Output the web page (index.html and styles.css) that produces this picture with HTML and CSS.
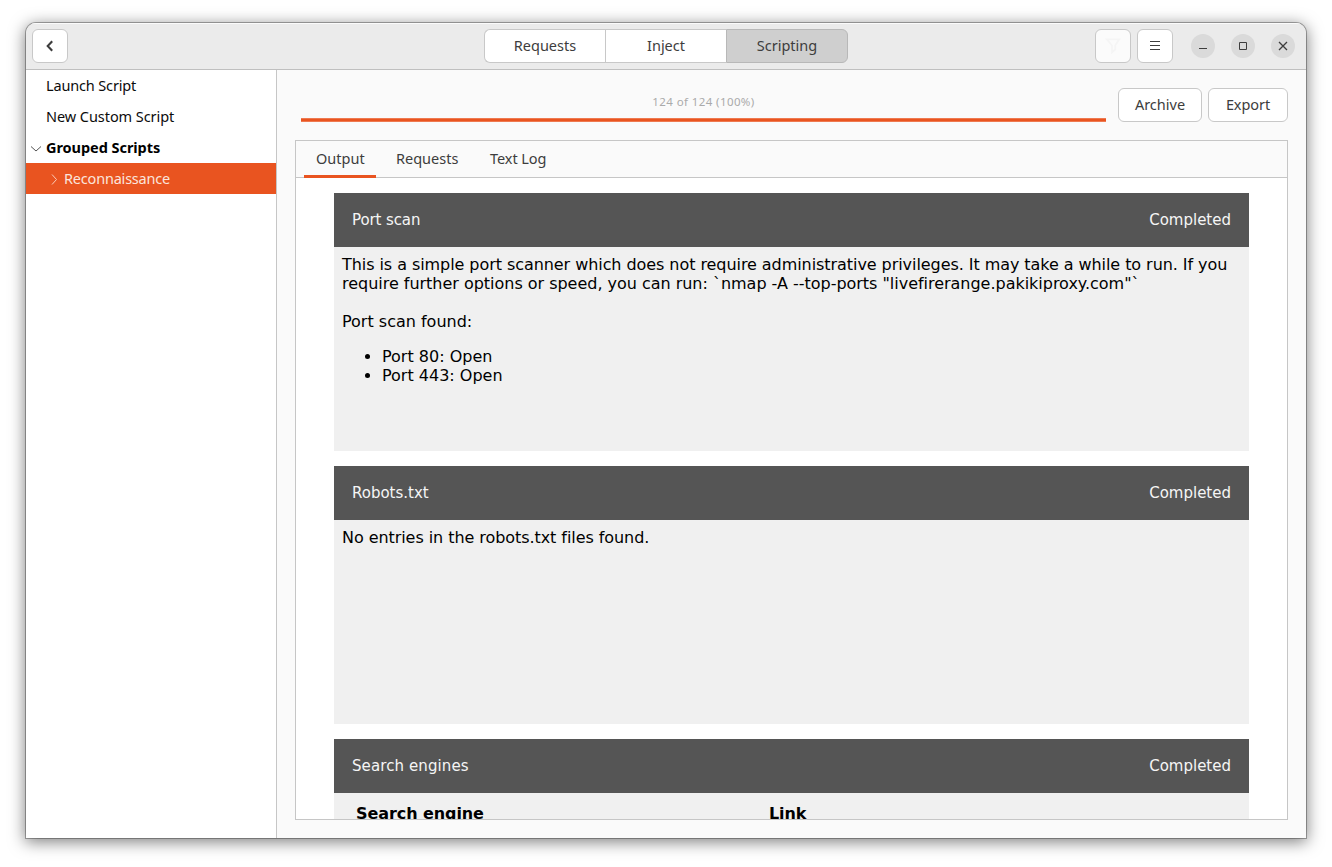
FILE: index.html
```html
<!DOCTYPE html>
<html lang="en">
<head>
<meta charset="utf-8">
<title>Scripting</title>
<link rel="stylesheet" href="styles.css">
</head>
<body>
<div class="window">
  <header class="headerbar">
    <div class="header-start">
      <button class="btn icon-btn" aria-label="Back">
        <svg width="16" height="16" viewBox="0 0 16 16"><path d="M10.2 3.2 5.7 8l4.500 4.800" fill="none" stroke="#3d3d3d" stroke-width="2.100"/></svg>
      </button>
    </div>
    <nav class="switcher">
      <button class="seg"><span class="t-requests">Requests</span></button>
      <button class="seg"><span class="t-inject">Inject</span></button>
      <button class="seg active"><span class="t-scripting">Scripting</span></button>
    </nav>
    <div class="header-end">
      <button class="btn icon-btn disabled" aria-label="Filter">
        <svg width="16" height="18" viewBox="0 0 16 18"><path d="M1.800 2.300h12.400L10.200 8.500v4L7 15.200V8.500z" fill="none" stroke="#f5f5f5" stroke-width="1.800"/></svg>
      </button>
      <button class="btn icon-btn" aria-label="Menu">
        <svg width="16" height="16" viewBox="0 0 16 16"><path d="M3 3.500h10M3 7.500h10M3 11.500h10" fill="none" stroke="#3d3d3d"/></svg>
      </button>
      <div class="controls">
        <button class="ctl" aria-label="Minimize"><svg width="16" height="16" viewBox="0 0 16 16"><path d="M4 10.500h8" stroke="#3d3d3d"/></svg></button>
        <button class="ctl" aria-label="Maximize"><svg width="16" height="16" viewBox="0 0 16 16"><path d="M4.500 4.500h7v7h-7z" fill="none" stroke="#3d3d3d"/></svg></button>
        <button class="ctl" aria-label="Close"><svg width="16" height="16" viewBox="0 0 16 16"><path d="m4 4 8 8M12 4l-8 8" stroke="#3d3d3d" stroke-width="1.300"/></svg></button>
      </div>
    </div>
  </header>
  <div class="content">
    <aside class="sidebar">
      <div class="row"><span class="expander"></span><span class="t-launch">Launch Script</span></div>
      <div class="row"><span class="expander"></span><span class="t-new">New Custom Script</span></div>
      <div class="row group"><span class="expander"><svg width="12" height="12" viewBox="0 0 12 12"><path d="m1 4.500 5 4.500 5-4.500" fill="none" stroke="#555"/></svg></span><span class="t-grouped">Grouped Scripts</span></div>
      <div class="row child selected"><span class="expander"><svg width="12" height="12" viewBox="0 0 12 12"><path d="m4 1.500 4.500 5L4 11.500" fill="none" stroke="#f9cbb9"/></svg></span><span class="t-recon">Reconnaissance</span></div>
    </aside>
    <main class="main">
      <div class="toolbar">
        <div class="progress">
          <span class="progress-text">124 of 124 (100%)</span>
          <div class="progress-bar"></div>
        </div>
        <button class="btn archive"><span class="t-archive">Archive</span></button>
        <button class="btn export"><span class="t-export">Export</span></button>
      </div>
      <section class="notebook">
        <div class="tabs">
          <button class="tab current"><span class="t-output">Output</span></button>
          <button class="tab"><span class="t-requests">Requests</span></button>
          <button class="tab"><span class="t-log">Text Log</span></button>
        </div>
        <div class="page">
          <article class="card">
            <div class="card-head"><span class="t-port">Port scan</span><span>Completed</span></div>
            <div class="card-body">
              <p><span class="tight">This is a simple port scanner which does not require administrative privileges. It may take a while to run. If you</span><br><span class="snug">require further options or speed, you can run: `nmap -A --top-ports "livefirerange.pakikiproxy.com"`</span></p>
              <p class="found">Port scan found:</p>
              <ul><li>Port 80: Open</li><li>Port 443: Open</li></ul>
            </div>
          </article>
          <article class="card">
            <div class="card-head"><span>Robots.txt</span><span>Completed</span></div>
            <div class="card-body"><p class="tight">No entries in the robots.txt files found.</p></div>
          </article>
          <article class="card">
            <div class="card-head"><span class="t-search">Search engines</span><span>Completed</span></div>
            <div class="card-body table"><b>Search engine</b><b>Link</b></div>
          </article>
        </div>
      </section>
    </main>
  </div>
</div>
</body>
</html>
```
FILE: styles.css
```css
* { box-sizing: border-box; }
html, body { height: 100%; }
body {
  margin: 0;
  padding: 23px 26px 29px;
  background: #fff;
  overflow: hidden;
  font: 14.5px/20px "Noto Sans", sans-serif;
  color: #3d3d3d;
}
button {
  margin: 0;
  padding: 0;
  font: inherit;
  color: inherit;
  background: none;
  border: 0;
  white-space: nowrap;
}
svg { display: block; }
.window {
  display: flex;
  flex-direction: column;
  height: 815px;
  border-radius: 10px 10px 0 0;
  overflow: hidden;
  background: #fafafa;
  box-shadow: 0 0 0 1px rgba(0, 0, 0, .3), 0 3px 16px 1px rgba(0, 0, 0, .5);
}
.headerbar {
  display: grid;
  grid-template-columns: 1fr 364px 1fr;
  align-items: start;
  height: 47px;
  padding: 6px;
  background: #ebebeb;
  border-bottom: 1px solid #bfbfbf;
  box-shadow: inset 0 1px #fbfbfb;
}
.btn {
  display: flex;
  align-items: center;
  justify-content: center;
  height: 34px;
  background: #fff;
  border: 1px solid #c8c8c8;
  border-radius: 6px;
}
.icon-btn { width: 36px; }
.disabled { background: #fbfbfb; }
.switcher { display: flex; height: 34px; }
.seg {
  width: 121px;
  padding-bottom: 2px;
  background: #fff;
  border: 1px solid #c8c8c8;
  border-right: 0;
}
.seg:first-child { border-radius: 6px 0 0 6px; }
.seg.active {
  width: 122px;
  background: #cfcfcf;
  border: 1px solid #b8b8b8;
  border-radius: 0 6px 6px 0;
}
.header-end { display: flex; justify-content: flex-end; gap: 6px; }
.controls { display: flex; gap: 16px; padding: 5px 5px 0 12px; }
.ctl {
  display: grid;
  place-items: center;
  width: 24px;
  height: 24px;
  border-radius: 50%;
  background: #dadada;
}
.content { display: flex; flex: 1; min-height: 0; }
.sidebar {
  width: 251px;
  background: #fff;
  border-right: 1px solid #c6c6c6;
  color: #0c0c0c;
}
.row { display: flex; align-items: center; height: 31px; padding: 0 0 2px 4px; }
.expander { width: 12px; margin: 2px 4px 0 0; }
.group { font-weight: 700; color: #000; }
.child { padding-left: 22px; }
.selected { background: #e95420; color: #fbe4dc; }
.t-launch { letter-spacing: -.17px; }
.t-new { letter-spacing: -.06px; }
.t-grouped { letter-spacing: -.05px; }
.t-recon { letter-spacing: -.2px; }
.t-launch { letter-spacing: -.15px; }
.t-log, .t-export { letter-spacing: -.07px; }
.main {
  display: flex;
  flex-direction: column;
  flex: 1;
  min-width: 0;
  padding: 18px;
}
.toolbar { display: flex; padding-left: 6px; margin-bottom: 18px; }
.progress { width: 805px; margin-right: 12px; text-align: center; }
.progress-text {
  display: block;
  height: 30px;
  padding-top: 4px;
  font-size: 11.5px;
  letter-spacing: .4px;
  color: #aaa;
}
.progress-bar {
  height: 4px;
  background: #e95420;
  border: solid #ee7950;
  border-width: 1px 0;
}
.archive { width: 84px; margin-right: 6px; padding-bottom: 2px; }
.export { width: 80px; padding-bottom: 2px; }
.notebook {
  display: flex;
  flex-direction: column;
  height: 680px;
  border: 1px solid #c6c6c6;
}
.tabs {
  display: flex;
  flex: none;
  height: 37px;
  padding-left: 8px;
  gap: 8px;
  box-shadow: inset 0 -1px #c6c6c6;
}
.tab { padding: 0 12px; border-bottom: 3px solid transparent; }
.tab.current { border-bottom-color: #e95420; }
.tab:nth-child(1) { width: 72px; }
.tab:nth-child(2) { width: 86px; }
.tab:nth-child(3) { width: 80px; }
.page {
  flex: 1;
  min-height: 0;
  overflow: hidden;
  padding: 15px 38px 0;
  background: #fff;
  font-family: "DejaVu Sans", sans-serif;
}
.card { height: 258px; margin-bottom: 15px; background: #f0f0f0; }
.card-head {
  display: flex;
  align-items: center;
  justify-content: space-between;
  height: 54px;
  padding: 0 18px;
  background: #555;
  color: #f5f5f5;
  font-size: 15px;
}
.t-port { letter-spacing: -.1px; }
.t-search { letter-spacing: .1px; }
.card-body { padding: 8px; font-size: 16px; line-height: 19px; color: #000; }
.card-body p { margin: 0; white-space: nowrap; }
.card-body .found { margin: 19px 0 16px; }
.card-body ul { margin: 0; padding-left: 40px; }
.tight { letter-spacing: -.063px; }
.snug { letter-spacing: -.02px; }
.table {
  display: grid;
  grid-template-columns: 413px 1fr;
  padding: 11px 22px;
  letter-spacing: -.08px;
}
```
